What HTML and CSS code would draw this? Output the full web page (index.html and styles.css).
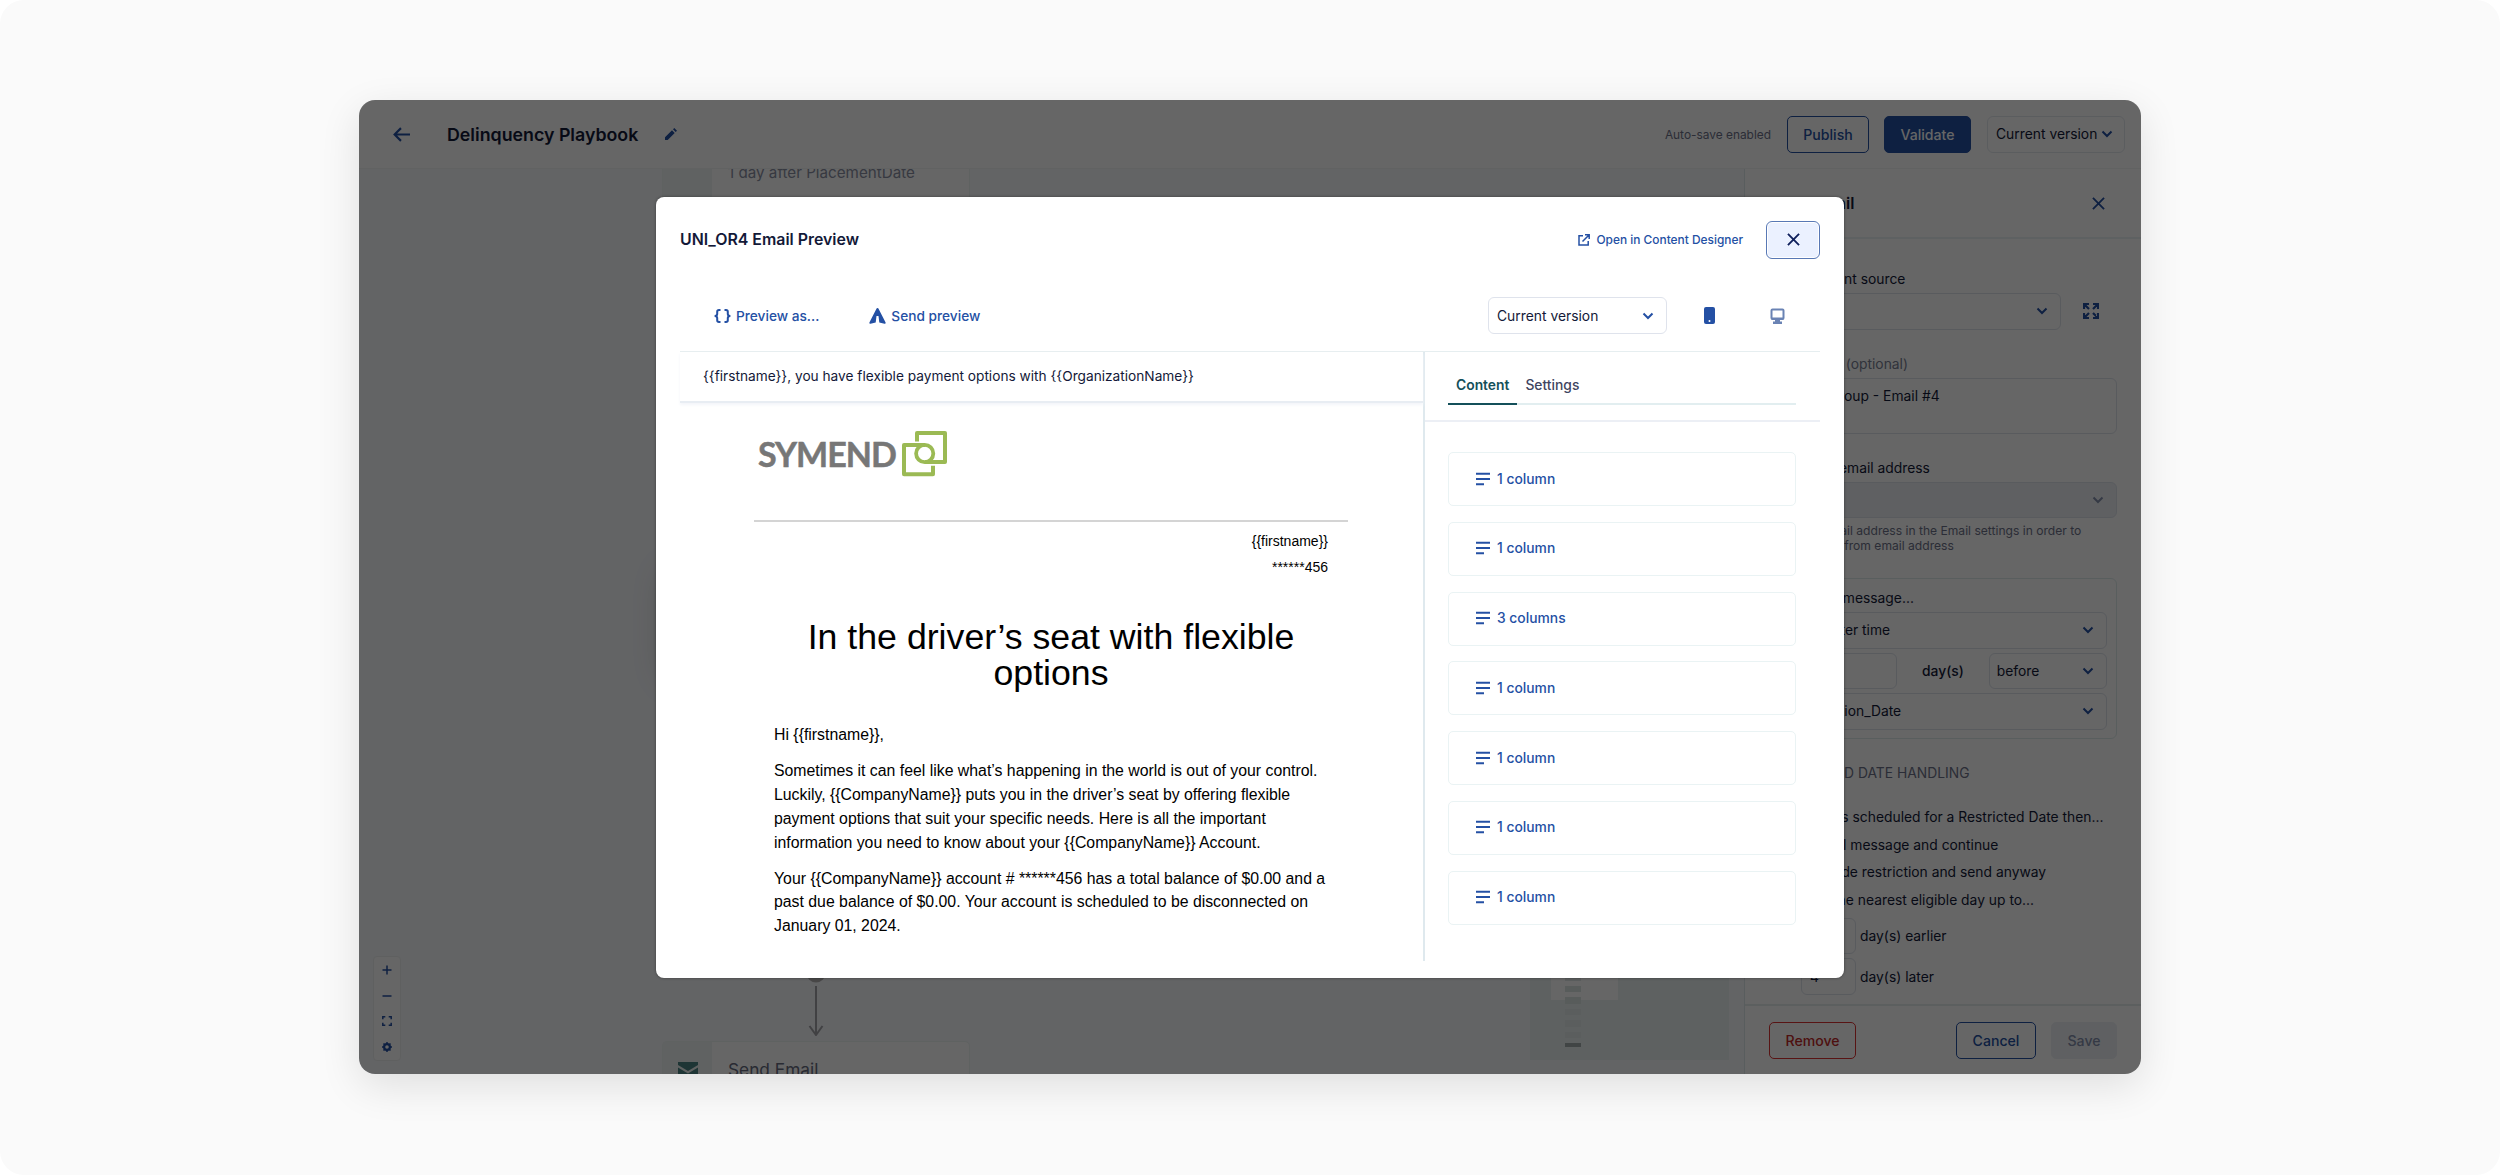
FILE: index.html
```html
<!doctype html>
<html lang="en">
<head>
	<meta charset="UTF-8">
	<title>Delinquency Playbook</title>
	<link rel="stylesheet" href="styles.css">
</head>
<body>
	<svg width="0" height="0" class="defs">
		<symbol id="chev" viewBox="0 0 12 12"><path d="M1.5 3.5L6 8l4.5-4.5" fill="none" stroke="currentColor" stroke-width="2"/></symbol>
		<symbol id="cross" viewBox="0 0 14 14"><path d="M1 1l12 12M13 1L1 13" fill="none" stroke="currentColor" stroke-width="2"/></symbol>
		<symbol id="rows" viewBox="0 0 14 14"><path d="M0 1.8h14M0 7h14M0 12.2h8" fill="none" stroke="currentColor" stroke-width="2"/></symbol>
	</svg>
	<div class="stage">
	<div class="app">
		<header class="topbar">
			<svg class="back" viewBox="0 0 16 14"><path d="M7.5 1L1.5 7l6 6M1.5 7H16" fill="none" stroke="currentColor" stroke-width="2"/></svg>
			<h1>Delinquency Playbook</h1>
			<svg class="pencil" viewBox="0 0 12 12"><path d="M0 12V9.3l7-7L9.7 5l-7 7zM8 1.3L9.3 0 12 2.7 10.7 4z" fill="currentColor"/></svg>
			<span class="autosave">Auto-save enabled</span>
			<button class="btn publish">Publish</button>
			<button class="btn validate">Validate</button>
			<div class="version">Current version<svg class="chev"><use href="#chev"/></svg></div>
		</header>
		<div class="body">
			<main class="canvas">
				<div class="node first"><i></i><p>1 day after PlacementDate</p></div>
				<div class="glow"></div>
				<div class="node last">
					<i><svg width="20" height="17" viewBox="0 0 20 17"><path d="M0 0h20v3L10 9 0 3z M0 5.5l10 6 10-6V17H0z" fill="currentColor"/></svg></i>
					<p>Send Email</p>
				</div>
				<svg class="arrow" width="20" height="74" viewBox="0 0 20 74"><circle cx="10" cy="11" r="9.5" fill="#b4b2b2"/><path d="M10 24v48M3.5 64L10 73l6.5-9" fill="none" stroke="#a4a4a8" stroke-width="2"/></svg>
				<div class="zoom">
					<svg viewBox="0 0 12 12"><path d="M6 1.5v9M1.5 6h9" /></svg>
					<svg viewBox="0 0 12 12"><path d="M1.5 6h9"/></svg>
					<svg viewBox="0 0 12 12"><path d="M1.8 4.3V1.8h2.5M7.7 1.8h2.5v2.5M10.2 7.7v2.5H7.7M4.3 10.2H1.8V7.7"/></svg>
					<svg viewBox="0 0 12 12"><circle cx="6" cy="6" r="2.9" stroke-width="2.2"/><path d="M6 1v2M6 9v2M1 6h2M9 6h2M2.5 2.5l1 1M8.5 8.5l1 1M9.5 2.5l-1 1M2.5 9.5l1-1"/></svg>
				</div>
				<div class="minimap">
					<div class="view"></div>
					<div class="bars"><i></i><i></i><i></i><i></i><i></i><i></i><i></i></div>
				</div>
			</main>
			<aside class="panel">
				<div class="panel-head"><h2>Send Email</h2><svg class="cross"><use href="#cross"/></svg></div>
				<div class="form">
					<label class="src">Content source</label>
					<div class="source">
						<div class="field"><span></span><svg class="chev"><use href="#chev"/></svg></div>
						<svg class="expand" viewBox="0 0 16 16"><path d="M1 6V1h5M1 1l5 5M10 1h5v5M15 1l-5 5M1 10v5h5M1 15l5-5M15 10v5h-5M15 15l-5-5" fill="none" stroke="currentColor" stroke-width="2.2"/></svg>
					</div>
					<label class="opt"><b>Description</b> (optional)</label>
					<div class="field area">Control Group - Email #4</div>
					<label class="from">Send from email address</label>
					<div class="field off"><span></span><svg class="chev"><use href="#chev"/></svg></div>
					<p class="hint"><span>Enter an email address in the Email settings in order to</span><span>configure a from email address</span></p>
					<div class="sendbox">
						<p>Send this message...</p>
						<div class="field"><span>At the later time</span><svg class="chev"><use href="#chev"/></svg></div>
						<div class="when">
							<div class="field"></div>
							<em>day(s)</em>
							<div class="field"><span>before</span><svg class="chev"><use href="#chev"/></svg></div>
						</div>
						<div class="field"><span>Termination_Date</span><svg class="chev"><use href="#chev"/></svg></div>
					</div>
					<h3>RESTRICTED DATE HANDLING</h3>
					<ul>
						<li class="lead">If this is scheduled for a Restricted Date then...</li>
						<li>Cancel message and continue</li>
						<li>Override restriction and send anyway</li>
						<li>Find the nearest eligible day up to...</li>
					</ul>
					<div class="days"><div class="field">4</div>day(s) earlier</div>
					<div class="days"><div class="field">4</div>day(s) later</div>
				</div>
				<footer>
					<button class="btn remove">Remove</button>
					<button class="btn cancel">Cancel</button>
					<button class="btn save">Save</button>
				</footer>
			</aside>
		</div>
		<div class="overlay"></div>
		<section class="modal">
			<div class="modal-head">
				<h2>UNI_OR4 Email Preview</h2>
				<a class="open"><svg viewBox="0 0 12 12"><path d="M5 1.8H1V11h9.2V7M7 .8h4.2V5M11 1L4.5 7.5" fill="none" stroke="currentColor" stroke-width="1.5"/></svg>Open in Content Designer</a>
				<button class="close"><svg class="cross"><use href="#cross"/></svg></button>
			</div>
			<div class="tools">
				<a class="as"><svg width="17" height="14" viewBox="0 0 17 14"><path d="M6.500 1H5Q3.200 1 3.200 2.700V5Q3.200 7 .6 7 3.200 7 3.200 9v2.300Q3.200 13 5 13h1.500M10.500 1H12Q13.800 1 13.800 2.700V5q0 2 2.600 2Q13.800 7 13.800 9v2.300Q13.800 13 12 13h-1.500" fill="none" stroke="currentColor" stroke-width="2"/></svg>Preview as...</a>
				<a class="send"><svg width="17" height="16" viewBox="0 0 17 16"><path d="M8.500 0Q9.300 0 9.800 1.200L16.600 14.500Q17 16 15.500 15.800L10.300 14.600 9.500 8H7.500l-.8 6.600L1.500 15.800Q0 16 .4 14.500L7.200 1.200Q7.700 0 8.500 0z" fill="currentColor"/></svg>Send preview</a>
				<div class="field"><span>Current version</span><svg class="chev"><use href="#chev"/></svg></div>
				<svg class="phone" width="11" height="17" viewBox="0 0 11 17"><rect width="11" height="17" rx="2" fill="#2450a4"/><circle cx="5.500" cy="14" r="1" fill="#fff"/></svg>
				<svg class="monitor" width="15" height="16" viewBox="0 0 15 16"><rect x="1.500" y="1.500" width="12" height="9.500" rx="1" fill="none" stroke="#6a83b4" stroke-width="2"/><path d="M1.500 9.500h12v2h-12zM5 11h5v2.500h2V16H3v-2.500h2z" fill="#6a83b4"/></svg>
			</div>
			<div class="cols">
				<div class="preview">
					<div class="subject">{{firstname}}, you have flexible payment options with {{OrganizationName}}</div>
					<div class="email">
						<div class="logo">
							<span>SYMEND</span>
							<svg width="46" height="46" viewBox="0 0 46 46"><path d="M15 10.500V2h28v29H23M31 34.700v8.600H2V14h21" fill="none" stroke="#9bba54" stroke-width="4" stroke-linejoin="round"/><circle cx="22.700" cy="22.500" r="8.600" fill="none" stroke="#9bba54" stroke-width="3.800"/></svg>
						</div>
						<div class="who"><p>{{firstname}}</p><p>******456</p></div>
						<h1>In the driver’s seat with flexible options</h1>
						<div class="copy">
							<p>Hi {{firstname}},</p>
							<p>Sometimes it can feel like what’s happening in the world is out of your control.<br>Luckily, {{CompanyName}} puts you in the driver’s seat by offering flexible<br>payment options that suit your specific needs. Here is all the important<br>information you need to know about your {{CompanyName}} Account.</p>
							<p>Your {{CompanyName}} account # ******456 has a total balance of $0.00 and a<br>past due balance of $0.00. Your account is scheduled to be disconnected on<br>January 01, 2024.</p>
						</div>
					</div>
				</div>
				<div class="side">
					<div class="tabwrap"><div class="tabs"><span class="on">Content</span><span>Settings</span></div></div>
					<ul class="cards">
						<li><svg><use href="#rows"/></svg>1 column</li>
						<li><svg><use href="#rows"/></svg>1 column</li>
						<li><svg><use href="#rows"/></svg>3 columns</li>
						<li><svg><use href="#rows"/></svg>1 column</li>
						<li><svg><use href="#rows"/></svg>1 column</li>
						<li><svg><use href="#rows"/></svg>1 column</li>
						<li><svg><use href="#rows"/></svg>1 column</li>
					</ul>
				</div>
			</div>
		</section>
	</div>
	</div>
</body>
</html>
```
FILE: styles.css
```css
*{padding: 0; margin: 0; list-style: none; box-sizing: border-box;}
body{background: #fff; font-family: Inter, "Liberation Sans", sans-serif; font-size: 13.85px; color: #131938; white-space: nowrap;}
button{font: inherit; background: none;}
.defs{position: absolute;}
.stage{
	width: 2500px; height: 1175px; padding: 100px 359px 0;
	background: #fafafa; border-radius: 24px; overflow: hidden;
}
.app{
	position: relative; height: 974px; border-radius: 16px; overflow: hidden;
	display: flex; flex-direction: column; background: #fff;
	box-shadow: 0 12px 40px rgba(0,0,0,.11);
}
.chev{width: 12px; height: 12px; flex: none; color: #2450a4;}
.cross{width: 13px; height: 13px; display: block;}
.btn{
	height: 37px; border: 1px solid #2450a4; border-radius: 5px;
	color: #2450a4; font-weight: 500; font-size: 14.1px;
}

/* top bar */
.topbar{
	height: 69px; display: flex; align-items: center; flex: none;
	padding: 0 16px 0 34px; border-bottom: 1px solid #f2f6f6;
}
.back{width: 17px; height: 15px; color: #2450a4; margin-right: 37px;}
.topbar h1{font-size: 17.8px; font-weight: 600; width: 191px;}
.pencil{width: 12px; height: 12px; color: #2450a4; margin-left: 27px;}
.autosave{margin-left: auto; font-size: 11.9px; color: #6d7289; margin-right: 16px;}
.publish{width: 82px; margin-right: 15px;}
.validate{width: 87px; margin-right: 16px; background: #2450a4; color: #fff;}
.version{
	width: 138px; height: 37px; border: 1px solid #e4e8ee; border-radius: 6px;
	display: flex; align-items: center; padding: 0 11px 0 8px; justify-content: space-between;
}

.body{flex: 1; display: flex; min-height: 0;}

/* playbook canvas */
.canvas{flex: 1; position: relative; background: #f7f9fd; overflow: hidden;}
.node{
	position: absolute; left: 303px; width: 308px; display: flex;
	background: #fff; border: 1px solid #edf5f3; border-radius: 5px;
}
.node i{width: 49px; background: #eff5f4; color: #4c8585;}
.node i svg{display: block; margin: 20px 0 0 15px;}
.node p{padding-left: 16px; color: #8a8fa3;}
.first{top: -60px; height: 100px;}
.first p{font-size: 15.2px; padding-top: 53px;}
.last{top: 872px; height: 60px;}
.last p{font-size: 17.3px; padding-top: 17px; color: #666b80;}
.glow{position: absolute; left: 305px; top: 400px; width: 300px; height: 112px; border-radius: 20px; box-shadow: 0 0 30px rgba(80,80,60,.25);}
.arrow{position: absolute; left: 447px; top: 793px;}
.zoom{
	position: absolute; left: 14px; top: 787px; width: 28px; height: 105px;
	background: #fff; border: 1px solid #eef0f0; border-radius: 4px;
	display: flex; flex-direction: column; align-items: center; justify-content: space-around;
}
.zoom svg{width: 12px; height: 12px; fill: none; stroke: #2450a4; stroke-width: 1.5;}
.minimap{position: absolute; left: 1171px; top: 772px; width: 199px; height: 119px; background: #ebf3f3;}
.view{width: 67px; height: 59px; background: #fff; margin-left: 21px;}
.bars{
	position: absolute; left: 35px; top: 33px; width: 16px;
	display: flex; flex-direction: column; gap: 5px;
}
.bars i{height: 6.5px; background: #e4eceb;}
.bars i:nth-child(2),.bars i:nth-child(3){background: #dce5e4;}
.bars i:last-child{height: 4px; background: #a4adac;}

/* right panel */
.panel{width: 397px; border-left: 1px solid #dfe9eb; display: flex; flex-direction: column;}
.panel-head{
	height: 70px; display: flex; justify-content: space-between; align-items: center;
	padding: 0 36px 0 24px; border-bottom: 2px solid #ecf2f4; color: #2450a4; flex: none;
}
.panel-head h2{font-size: 16px; font-weight: 600; color: #131938;}
.form{flex: 1; padding: 30px 24px 0; min-height: 0;}
.form label{display: block; line-height: 20px; width: max-content;}
.form .src{padding-left: 36px;}
.source{display: flex; align-items: center; margin: 4px 0 24px;}
.source .field{width: 292px;}
.expand{width: 16px; height: 16px; color: #2450a4; margin-left: 22px;}
.field{
	height: 36.5px; border: 1px solid #dfe3ec; border-radius: 6px;
	display: flex; align-items: center; justify-content: space-between; padding: 0 12px 0 8px;
}
.opt{color: #7a7f95; margin-left: -2px;}
.opt b{font-weight: 400; color: #131938;}
.area{height: 56px; align-items: flex-start; padding: 9px 0 0 7px; margin: 4px 0 24px;}
.from{margin-left: -2px;}
.off{background: #eef1f6; margin-top: 4px;}
.off .chev{color: #8590ac;}
.hint{font-size: 12.1px; line-height: 15px; color: #6d7289; margin: 5px 0 25px;}
.hint span{display: block; padding-left: 3px;}
.hint span:last-child{padding-left: 7px;}
.sendbox{border: 1px solid #dfecec; border-radius: 6px; padding: 9px 9px 9px 8px; height: 161px;}
.sendbox p{line-height: 20px; margin-bottom: 4px;}
.when{display: flex; align-items: center; margin: 4px 0;}
.when .field:first-child{width: 120px;}
.when em{font-style: normal; font-weight: 500; width: 92px; text-align: center;}
.when .field:last-child{width: 119px; padding-left: 7px;}
.form h3{font-size: 13.85px; font-weight: 400; color: #6d7289; margin: 24px 0 21px; line-height: 20px;}
.form li{line-height: 27.7px; padding-left: 32px;}
.form .lead{padding-left: 29px;}
.days{display: flex; align-items: center; padding-left: 32px; margin: 4px 0;}
.days:nth-last-child(2){margin-top: 3px;}
.days .field{width: 55px; margin-right: 4px;}
.panel footer{
	height: 70px; flex: none; border-top: 2px solid #e6eeee; padding: 16px 24px;
	display: flex; background: #fff; position: relative;
}
.remove{width: 87px; color: #c32a2a; border-color: #d33; margin-right: auto;}
.cancel{width: 80px; margin-right: 15px;}
.save{width: 66px; background: #eef1f6; border-color: #eef1f6; color: #8590ac;}

.overlay{position: absolute; inset: 0; background: rgba(0,0,0,.6);}

/* email preview dialog */
.modal{
	position: absolute; left: 297px; top: 97px; width: 1188px; height: 781px;
	background: #fff; border-radius: 8px; padding: 0 24px; box-shadow: 0 0 3px rgba(0,0,0,.4);
}
.modal-head{display: flex; align-items: center; height: 85px;}
.modal-head h2{font-size: 15.9px; font-weight: 600; margin-right: auto;}
.modal a{color: #2450a4; display: flex; align-items: center; font-weight: 500; font-size: 13.7px;}
.modal .open{font-size: 11.9px;}
.open svg{width: 12px; height: 12px; margin-right: 6px;}
.close{
	width: 54px; height: 38px; margin-left: 23px; border: 1px solid #5878b5; border-radius: 6px;
	background: #ebf1ff; color: #10205c; display: flex; align-items: center; justify-content: center;
	box-shadow: inset 0 0 0 1px #fff;
}
.tools{display: flex; align-items: center; height: 69px; padding: 0 35px 2px 34px;}
.tools a svg{margin-right: 5px;}
.send{margin-left: 50px;}
.tools .field{width: 179px; margin-left: auto;}
.phone{margin-left: 37px;}
.monitor{margin-left: 55px;}
.cols{display: flex; height: 610px; border-top: 1px solid #e6eef0;}
.preview{width: 745px; border-right: 2px solid #dfe9ee;}
.subject{height: 51px; line-height: 49px; padding-left: 23px; font-size: 13.7px; border-bottom: 2px solid #e8edf3; box-shadow: 0 2px 3px #f3f5fa;}
.email{
	width: 594px; margin-left: 74px; color: #000;
	font-family: "Liberation Sans", Arial, sans-serif;
}
.logo{height: 119px; border-bottom: 2px solid #d4d4d4; padding: 28px 0 0 4px; display: flex;}
.logo span{
	font: 700 34px/45px Lato, sans-serif; color: #777; width: 144px;
	letter-spacing: -1px; -webkit-text-stroke: .5px #777;
}
.who{padding: 6px 20px 0; text-align: right; font-size: 14px; line-height: 26px;}
.email h1{font-size: 35.7px; font-weight: 400; line-height: 36px; text-align: center; margin: 39px 40px 32px; white-space: normal;}
.copy{padding-left: 20px; font-size: 15.83px; line-height: 23.85px;}
.copy p{margin-bottom: 12.2px;}
.side{flex: 1;}
.tabwrap{height: 70px; padding: 14px 24px 0 23px; border-bottom: 2px solid #eceff5;}
.tabs{height: 39px; border-bottom: 2px solid #e2eef0; display: flex; color: #3f4560; font-weight: 500;}
.tabs span{height: 39px; line-height: 38px; padding: 0 8px;}
.tabs .on{border-bottom: 2px solid #14505a; color: #14505a; font-weight: 600;}
.cards{padding: 30px 24px 0 23px; display: grid; gap: 15.8px;}
.cards li{
	height: 54px; border: 1px solid #eaf3f4; border-radius: 5px; padding: 0 0 1px 27px;
	display: flex; align-items: center; color: #2450a4; font-weight: 500;
}
.cards svg{width: 14px; height: 14px; margin-right: 7px;}
```
